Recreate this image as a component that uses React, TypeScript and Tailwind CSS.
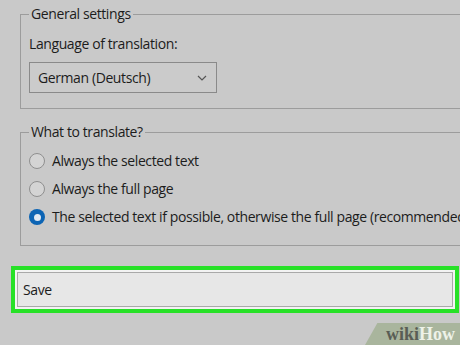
import React from "react";

const font = { fontFamily: '"Open Sans", "Noto Sans", sans-serif' };

const Radio = ({ checked, label }: { checked?: boolean; label: string }) => (
  <div className="flex items-center h-[28px] gap-[7px] whitespace-nowrap">
    {checked ? (
      <span className="w-[16px] h-[16px] rounded-full bg-[#0c64b4] flex items-center justify-center shrink-0">
        <span className="w-[7px] h-[7px] rounded-full bg-[#dfe8f2]" />
      </span>
    ) : (
      <span className="w-[16px] h-[16px] rounded-full border border-[#8f8f8f] bg-[#d4d4d4] shrink-0" />
    )}
    <span>{label}</span>
  </div>
);

export default function App() {
  return (
    <div
      className="relative w-[460px] h-[345px] overflow-hidden bg-[#c9c9c9] text-[14px] leading-[20px] tracking-[-0.4px] text-[#1c1c1c] pt-[4px]"
      style={font}
    >
      <fieldset className="ml-[20px] w-[470px] border border-r-0 border-[#9c9c9c] px-[8px] pb-[15px]">
        <legend className="px-[2px]">General settings</legend>
        <div className="mt-[10px]">Language of translation:</div>
        <div className="mt-[8px] w-[188px] h-[31px] border border-[#8a8a8a] bg-[#cbcbcb] flex items-center justify-between pl-[8px] pr-[9px]">
          <span>German (Deutsch)</span>
          <svg width="10" height="6" viewBox="0 0 10 6" fill="none" stroke="#555" strokeWidth="1.2">
            <path d="M1 1l4 4 4-4" />
          </svg>
        </div>
      </fieldset>

      <fieldset className="mt-[13px] ml-[20px] w-[470px] border border-r-0 border-[#9c9c9c] px-[8px] pb-[14px]">
        <legend className="px-[2px]">What to translate?</legend>
        <div className="mt-[5px] flex flex-col">
          <Radio label="Always the selected text" />
          <Radio label="Always the full page" />
          <Radio checked label="The selected text if possible, otherwise the full page (recommended)" />
        </div>
      </fieldset>

      <div className="mt-[20px] ml-[11px] w-[448px] border-[4px] border-[#27e127] bg-[#f3f3f3] p-[2px]">
        <div className="h-[35px] border border-[#a9a9a9] bg-[#e7e7e7] flex items-center pl-[5px]">
          Save
        </div>
      </div>

      <div className="absolute right-0 bottom-0 w-[95px] h-[22px] bg-[#a9b59d] [clip-path:polygon(13%_0,100%_0,100%_100%,0_100%)] flex items-center justify-end pr-[5px]">
        <span
          className="text-[18px] leading-[20px] font-bold tracking-normal"
          style={{ fontFamily: '"Liberation Serif", "DejaVu Serif", serif' }}
        >
          <span className="text-[#595d55]">wiki</span>
          <span className="text-[#eef2e8]">How</span>
        </span>
      </div>
    </div>
  );
}
